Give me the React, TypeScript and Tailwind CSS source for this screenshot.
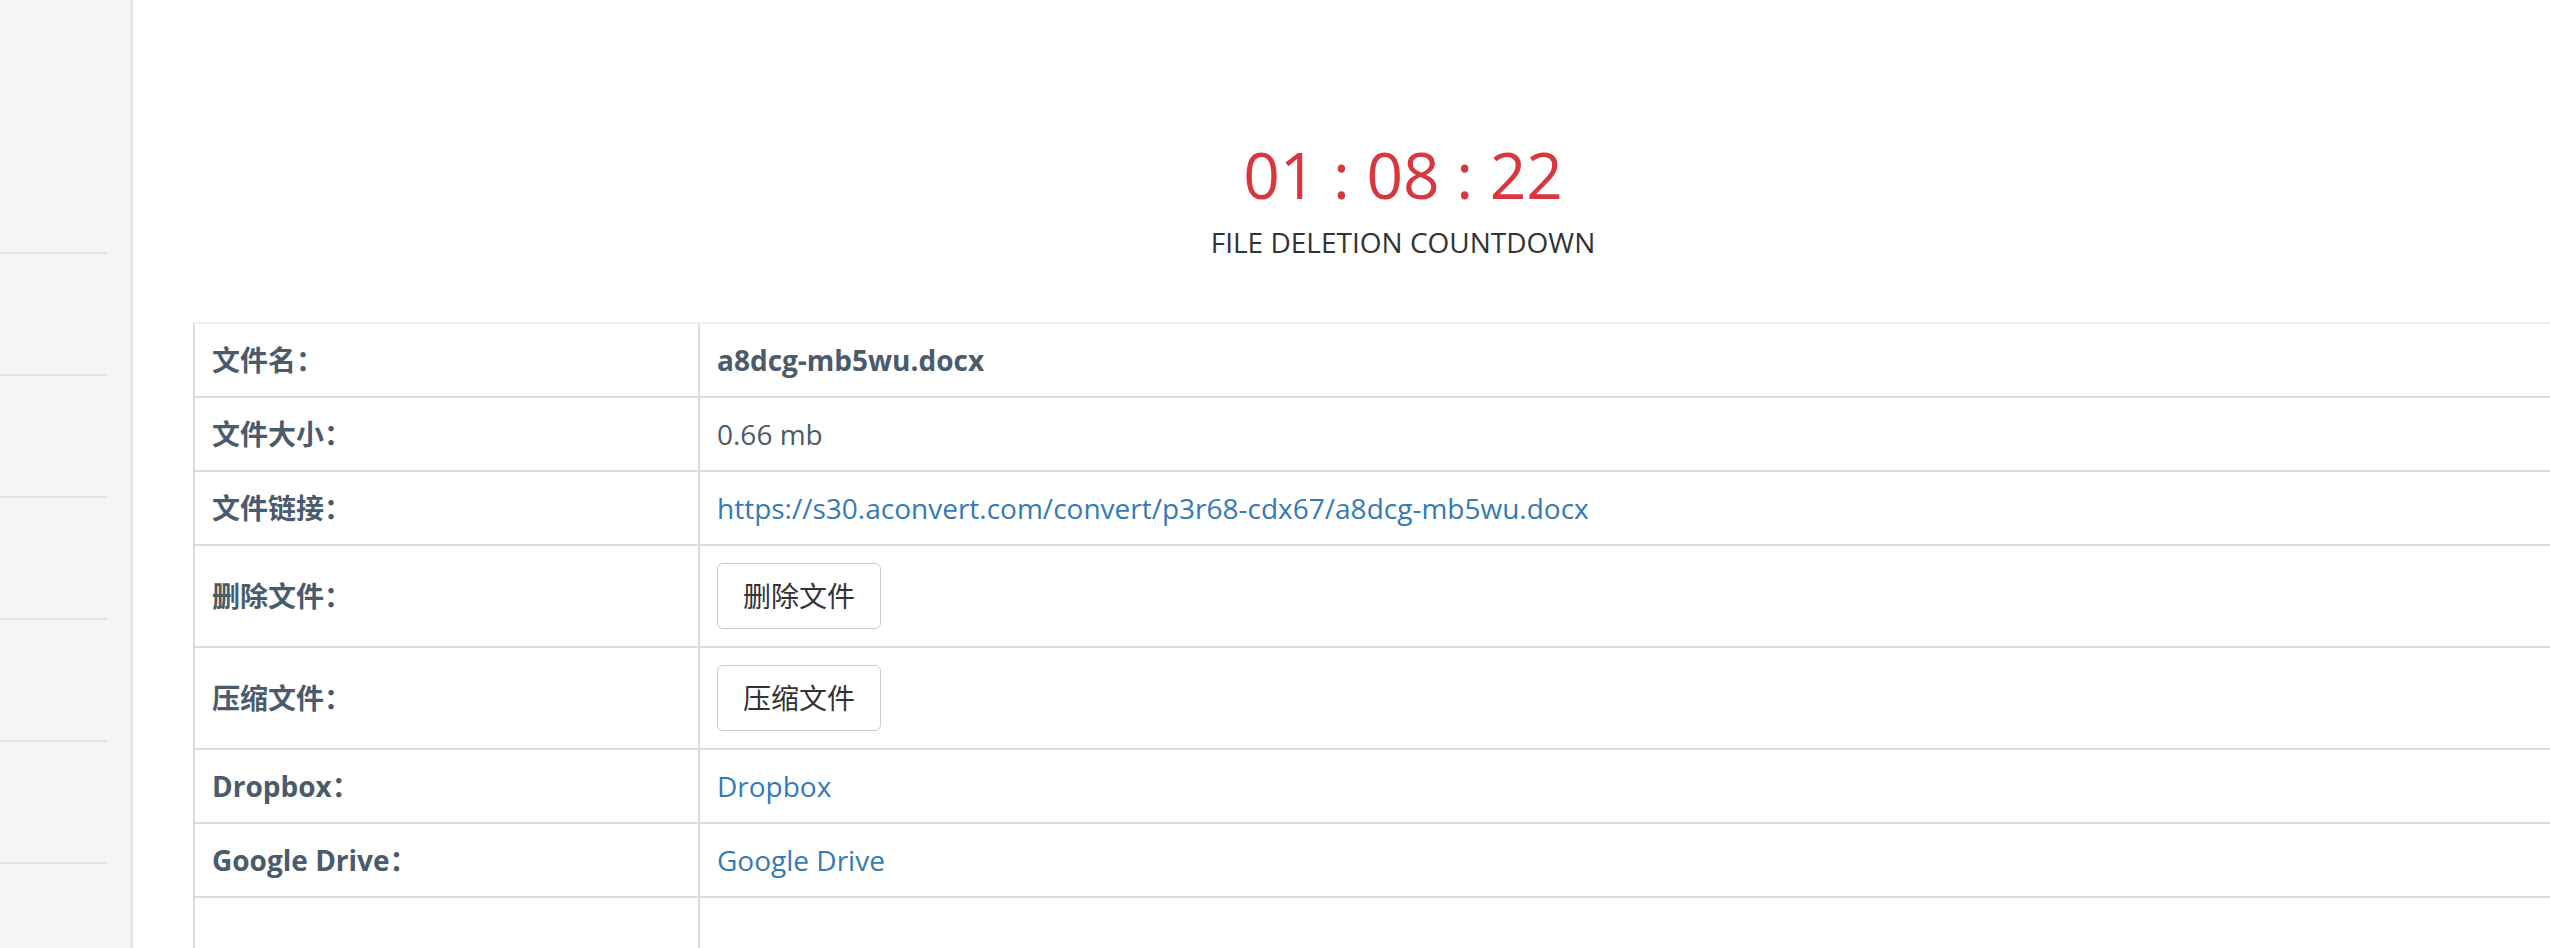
import React from "react";

const FONT = { fontFamily: '"Open Sans", "Noto Sans CJK SC", sans-serif' };

function Row({ label, children, tall }: { label: string; children: React.ReactNode; tall?: boolean }) {
  return (
    <div className="flex border-b-2 border-[#dddddd]">
      <div
        className={`w-[505px] shrink-0 border-r-2 border-[#dddddd] pl-[17px] font-bold text-[#4a5b6c] text-[28px] leading-[37px] flex items-center ${
          tall ? "h-[100px]" : "h-[72px]"
        }`}
      >
        {label}
      </div>
      <div
        className={`flex-1 pl-[17px] text-[28px] leading-[37px] flex items-center ${tall ? "h-[100px]" : "h-[72px]"}`}
      >
        {children}
      </div>
    </div>
  );
}

function Btn({ text }: { text: string }) {
  return (
    <button className="h-[66px] px-[25px] border border-[#cccccc] rounded-[6px] bg-white text-[#333333] text-[28px] leading-[38px]">
      {text}
    </button>
  );
}

export default function App() {
  return (
    <div className="w-screen h-screen overflow-hidden bg-white flex" style={FONT}>
      <aside className="w-[133px] shrink-0 h-full bg-[#f6f6f6] border-r-[3px] border-[#dfe6ec] pt-[132px]">
        {[0, 1, 2, 3, 4, 5, 6].map((i) => (
          <div key={i} className="w-[107px] h-[122px] border-b-2 border-[#dde3e9]" />
        ))}
      </aside>
      <main className="flex-1 pl-[60px] pt-[139px]">
        <div className="w-[2420px]">
          <div className="text-center text-[#d9363e] text-[64px] leading-[71px]">01 : 08 : 22</div>
          <div className="mt-[13px] text-center text-[#333333] text-[28px] leading-[38px]">FILE DELETION COUNTDOWN</div>
          <div className="mt-[61px] border-l-2 border-l-[#dddddd] border-t-2 border-t-[#edf1f4]">
            <Row label="文件名：">
              <span className="font-bold text-[#4a5b6c]">a8dcg-mb5wu.docx</span>
            </Row>
            <Row label="文件大小：">
              <span className="text-[#4a5b6c]">0.66 mb</span>
            </Row>
            <Row label="文件链接：">
              <a className="text-[#337ab7]" href="#">
                https://s30.aconvert.com/convert/p3r68-cdx67/a8dcg-mb5wu.docx
              </a>
            </Row>
            <Row label="删除文件：" tall>
              <Btn text="删除文件" />
            </Row>
            <Row label="压缩文件：" tall>
              <Btn text="压缩文件" />
            </Row>
            <Row label="Dropbox：">
              <a className="text-[#337ab7]" href="#">
                Dropbox
              </a>
            </Row>
            <Row label="Google Drive：">
              <a className="text-[#337ab7]" href="#">
                Google Drive
              </a>
            </Row>
            <Row label="" tall>
              <span />
            </Row>
          </div>
        </div>
      </main>
    </div>
  );
}
